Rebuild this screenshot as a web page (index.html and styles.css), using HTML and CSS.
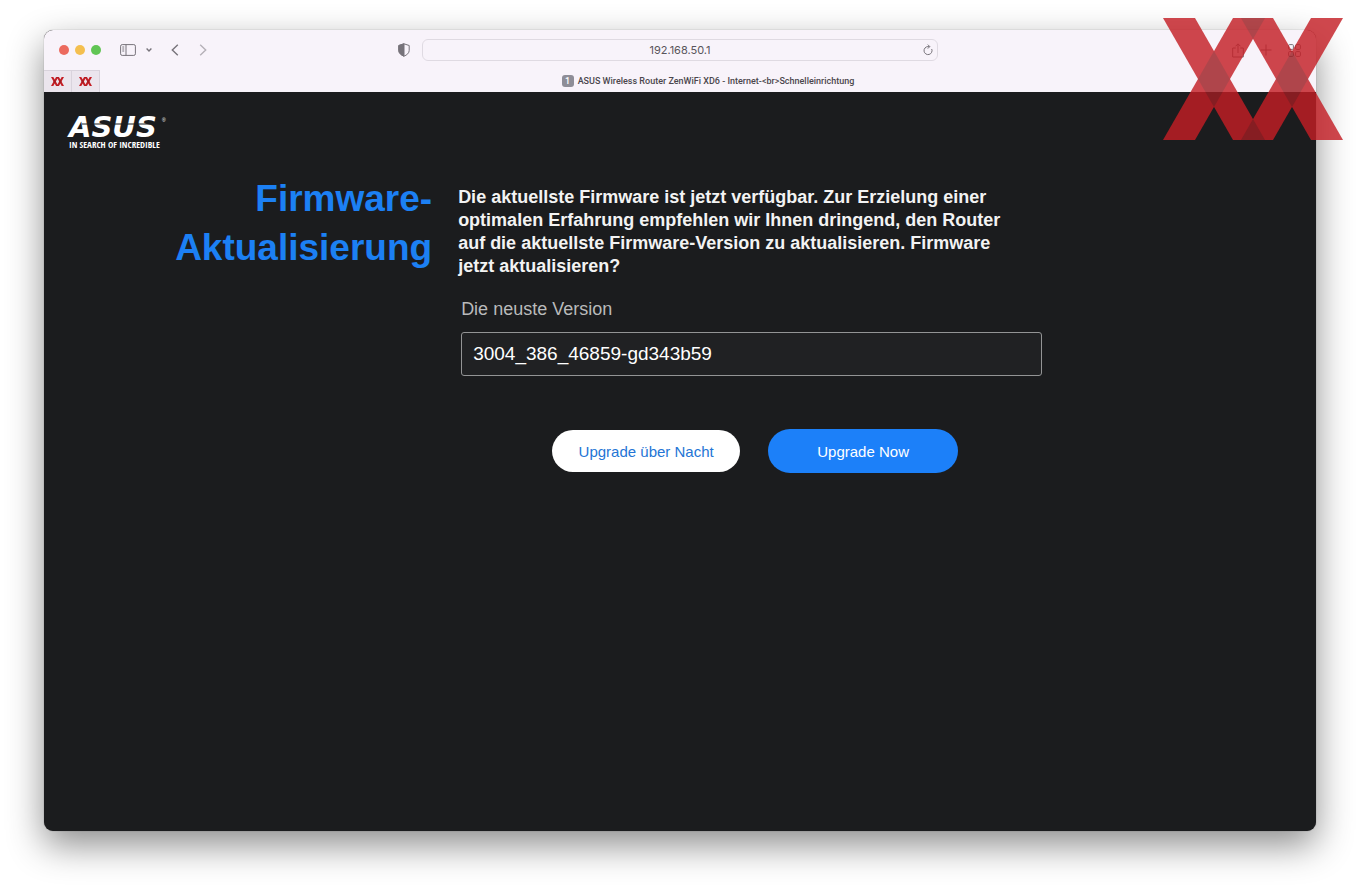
FILE: index.html
```html
<!DOCTYPE html>
<html lang="de">
<head>
<meta charset="utf-8">
<title>ASUS Wireless Router ZenWiFi XD6</title>
<link rel="stylesheet" href="styles.css">
</head>
<body>
<svg class="defs" aria-hidden="true">
  <symbol id="crossed-bands" viewBox="0 0 180 122">
    <g class="band">
      <path d="M0 0H32L102 122H70Z"/>
      <path d="M70 0H102L32 122H0Z"/>
      <path d="M78 0H110L180 122H148Z"/>
      <path d="M148 0H180L110 122H78Z"/>
    </g>
    <g class="overlap">
      <path d="M51 33L67 61L51 89L35 61Z"/>
      <path d="M129 33L145 61L129 89L113 61Z"/>
      <path d="M78 0H102L90 21Z"/>
      <path d="M78 122H102L90 101Z"/>
    </g>
  </symbol>
</svg>
<div class="window">
  <header class="chrome">
    <div class="toolbar">
      <div class="tools tools-left">
        <div class="lights"><span class="light red"></span><span class="light yellow"></span><span class="light green"></span></div>
        <button class="icon-button sidebar" aria-label="Seitenleiste">
          <svg width="16" height="12" viewBox="0 0 16 12"><rect x=".6" y=".6" width="14.8" height="10.8" rx="1.6"/><path d="M6 .6V11.4M2.3 3H4.2M2.3 5H4.2M2.3 7H4.2"/></svg>
        </button>
        <button class="icon-button chevron" aria-label="Tabgruppen">
          <svg width="6" height="4" viewBox="0 0 6 4"><path d="M.6 .6L3 3L5.4 .6"/></svg>
        </button>
        <button class="icon-button back" aria-label="Zurück">
          <svg width="8" height="12" viewBox="0 0 8 12"><path d="M6.8 .8L1.3 6L6.8 11.2"/></svg>
        </button>
        <button class="icon-button forward" aria-label="Vorwärts">
          <svg width="8" height="12" viewBox="0 0 8 12"><path d="M1.2 .8L6.7 6L1.2 11.2"/></svg>
        </button>
        <button class="icon-button shield" aria-label="Datenschutzbericht">
          <svg width="12" height="14" viewBox="0 0 12 14"><path d="M6 .8L11.2 2.5V7.5C11.2 10 9 12 6 13.2C3 12 .8 10 .8 7.5V2.5Z"/><path class="solid" d="M6 .8V13.2C3 12 .8 10 .8 7.5V2.5Z"/></svg>
        </button>
      </div>
      <div class="address">
        <input class="address-input" type="text" value="192.168.50.1" aria-label="Adresse">
        <button class="icon-button reload" aria-label="Neu laden">
          <svg width="10" height="12" viewBox="0 0 10 12"><path d="M8.7 5A4 4 0 1 1 5 2.6H6.5M4.8 .6L6.8 2.6L4.8 4.6"/></svg>
        </button>
      </div>
      <div class="tools tools-right">
        <button class="icon-button" aria-label="Teilen">
          <svg width="12" height="15" viewBox="0 0 12 15"><path d="M3.8 5H.7V14H11.3V5H8.2M6 10V1M3.5 3.3L6 .8L8.5 3.3"/></svg>
        </button>
        <button class="icon-button" aria-label="Neuer Tab">
          <svg width="12" height="12" viewBox="0 0 12 12"><path d="M6 .5V11.5M.5 6H11.5"/></svg>
        </button>
        <button class="icon-button" aria-label="Tabübersicht">
          <svg width="13" height="13" viewBox="0 0 13 13"><rect x=".6" y=".6" width="4.8" height="4.8" rx="1"/><rect x="7.6" y=".6" width="4.8" height="4.8" rx="1"/><rect x=".6" y="7.6" width="4.8" height="4.8" rx="1"/><rect x="7.6" y="7.6" width="4.8" height="4.8" rx="1"/></svg>
        </button>
      </div>
    </div>
    <nav class="tabs" aria-label="Tabs">
      <a class="pinned" href="#" aria-label="Angehefteter Tab 1"><svg width="13" height="9"><use href="#crossed-bands"/></svg></a>
      <a class="pinned" href="#" aria-label="Angehefteter Tab 2"><svg width="13" height="9"><use href="#crossed-bands"/></svg></a>
      <a class="tab" href="#"><span class="tab-number">1</span><span>ASUS Wireless Router ZenWiFi XD6 - Internet-&lt;br&gt;Schnelleinrichtung</span></a>
    </nav>
  </header>
  <main class="page">
    <svg class="brand" width="100" height="34" viewBox="0 0 100 34" role="img" aria-label="ASUS In Search of Incredible">
      <text class="brand-name" x="1" y="21">ASUS</text>
      <path class="brand-cut" d="M14 8H94"/>
      <text class="brand-mark" x="94" y="6">®</text>
      <text class="brand-claim" x="1" y="32">IN SEARCH OF INCREDIBLE</text>
    </svg>
    <section class="setup">
      <h1 class="title">Firmware-<br>Aktualisierung</h1>
      <form class="form">
        <p class="message">Die aktuellste Firmware ist jetzt verfügbar. Zur Erzielung einer optimalen Erfahrung empfehlen wir Ihnen dringend, den Router auf die aktuellste Firmware-Version zu aktualisieren. Firmware jetzt aktualisieren?</p>
        <div class="field">
          <label class="label" for="version">Die neuste Version</label>
          <input class="version" id="version" type="text" value="3004_386_46859-gd343b59" readonly>
        </div>
        <div class="actions">
          <button class="button secondary" type="button">Upgrade über Nacht</button>
          <button class="button primary" type="button">Upgrade Now</button>
        </div>
      </form>
    </section>
  </main>
</div>
<svg class="watermark" width="180" height="122" aria-hidden="true"><use href="#crossed-bands"/></svg>
</body>
</html>
```
FILE: styles.css
```css
* { box-sizing: border-box; }
body {
  margin: 0;
  min-height: 100vh;
  padding: 30px 44px 58px;
  display: flex;
  background: #fff;
  font-family: "Liberation Sans", Arial, sans-serif;
  position: relative;
}
button { font: inherit; border: 0; cursor: pointer; }
.defs { position: absolute; width: 0; height: 0; }

.window {
  flex: 1;
  display: flex;
  flex-direction: column;
  border-radius: 9px;
  overflow: hidden;
  background: #1b1c1e;
  box-shadow: 0 0 1px rgba(0, 0, 0, .5), 0 14px 36px rgba(0, 0, 0, .45);
}
.chrome { background: #f8f3fa; font-family: Inter, sans-serif; color: #4b474d; }
.toolbar {
  display: grid;
  grid-template-columns: 1fr 40.6% 1fr;
  align-items: center;
  height: 40px;
  column-gap: 12px;
}
.tools { display: flex; align-items: center; }
.tools-left { padding-left: 15px; }
.tools-right { justify-content: flex-end; gap: 16px; padding-right: 15px; }
.lights { display: flex; gap: 6px; margin-right: 19px; }
.light { width: 10px; height: 10px; border-radius: 50%; }
.red { background: #ec6a5e; }
.yellow { background: #f4bf4f; }
.green { background: #61c554; }
.icon-button { display: flex; padding: 0; background: none; color: #77737a; }
.icon-button svg { fill: none; stroke: currentColor; stroke-width: 1; }
.icon-button .solid { fill: currentColor; }
.chevron { margin-left: 10px; }
.back { margin-left: 19px; }
.forward { margin-left: 20px; color: #b5b0b7; }
.back svg, .forward svg, .chevron svg { stroke-width: 1.4; }
.shield { margin-left: auto; }
.address {
  display: flex;
  align-items: center;
  height: 22px;
  padding: 0 4px 0 14px;
  border: 1px solid #dfdae2;
  border-radius: 6px;
}
.address-input {
  flex: 1;
  min-width: 0;
  border: 0;
  padding: 0;
  background: none;
  text-align: center;
  font: 11px Inter, sans-serif;
  color: #59555b;
}
.tabs { display: flex; height: 22px; }
.pinned {
  width: 28px;
  display: flex;
  align-items: center;
  justify-content: center;
  background: #ebe5ed;
  border: 1px solid #d9d3dc;
  border-width: 1px 1px 0 0;
}
.tab {
  flex: 1;
  display: flex;
  align-items: center;
  justify-content: center;
  gap: 4px;
  color: inherit;
  text-decoration: none;
  font: 500 9px Roboto, sans-serif;
}
.tab-number {
  width: 12px;
  height: 12px;
  border-radius: 3px;
  background: #8e8d97;
  color: #fff;
  text-align: center;
  line-height: 12px;
}

.page { flex: 1; padding: 24px; }
.brand { display: block; overflow: visible; fill: #fff; }
.brand-name { font: italic bold 29px "DejaVu Sans", sans-serif; }
.brand-cut { stroke: #1b1c1e; stroke-width: 1; }
.brand-mark { font: 5px "Liberation Sans", sans-serif; }
.brand-claim { font: bold 9px "Open Sans Condensed", "Liberation Sans Narrow", sans-serif; }
.setup {
  display: grid;
  grid-template-columns: 29.75% minmax(0, 584px);
  column-gap: 26px;
  padding: 24px 0;
}
.title {
  margin: 0;
  text-align: right;
  font-size: 37px;
  line-height: 49px;
  color: #1c80f4;
}
.message {
  margin: 12px 0 0;
  padding-right: 32px;
  font-size: 18px;
  line-height: 23px;
  font-weight: bold;
  color: #f3f3f3;
}
.field { padding-left: 3px; margin-top: 20px; }
.label { display: block; font-size: 18px; line-height: 22px; color: #b9babb; }
.version {
  display: block;
  width: 100%;
  height: 44px;
  margin-top: 12px;
  padding: 0 11px;
  border: 1px solid #939495;
  border-radius: 3px;
  background: #202123;
  color: #fff;
  font: 19px "Liberation Sans", Arial, sans-serif;
}
.actions {
  display: flex;
  align-items: center;
  justify-content: center;
  gap: 28px;
  margin-top: 53px;
  padding-left: 10px;
}
.button { border-radius: 22px; font-size: 15px; }
.secondary { width: 188px; height: 42px; background: #fff; color: #2475d5; }
.primary { width: 190px; height: 44px; background: #1c80f9; color: #fff; }

.band { fill: #c41e25; }
.overlap { fill: #9f1e23; }
.pinned .band, .pinned .overlap { fill: #b02c24; }
.watermark {
  position: absolute;
  top: 18px;
  right: 17px;
  opacity: .81;
  pointer-events: none;
}
```
